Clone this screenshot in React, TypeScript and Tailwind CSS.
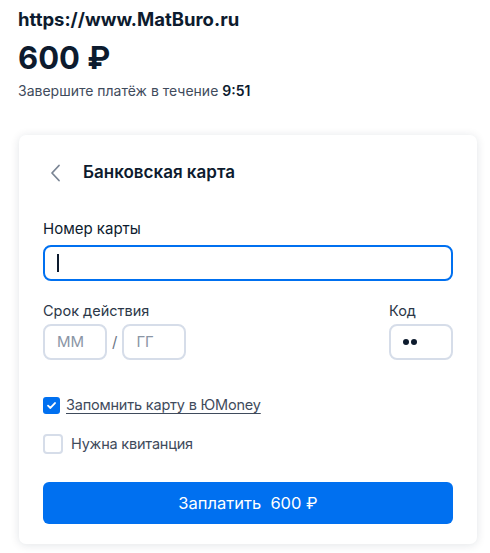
import React from "react";

const App: React.FC = () => {
  return (
    <div
      className="min-h-[553px] w-[490px] bg-white text-[#0d1b2e]"
      style={{ fontFamily: "Inter, 'Noto Sans', sans-serif" }}
    >
      <div className="px-[18px] pt-[6px]">
        <div className="text-[18.5px] font-bold leading-[26px]">https://www.MatBuro.ru</div>
        <div className="mt-[7px] text-[31px] font-bold leading-[38px]">600 ₽</div>
        <div className="mt-[5px] text-[14px] leading-[18px] text-[#3f4b5c]">
          Завершите платёж в течение <span className="font-semibold text-[#0d1b2e]">9:51</span>
        </div>
      </div>

      <div className="ml-[19px] mr-[13px] mt-[35px] rounded-[7px] bg-white px-[24px] pb-[20px] shadow-[0_1px_10px_rgba(20,30,60,0.12)]">
        <div className="flex h-[73px] items-center pt-[2px]">
          <svg width="20" height="20" viewBox="0 0 20 20" className="ml-[3px]">
            <path d="M13 2.5 L6 10 L13 17.5" fill="none" stroke="#7a8594" strokeWidth="1.8" strokeLinecap="round" strokeLinejoin="round" />
          </svg>
          <span className="ml-[17px] text-[17px] font-semibold">Банковская карта</span>
        </div>

        <div className="mt-[11px] text-[15px] leading-[20px]">Номер карты</div>
        <div className="mt-[6px] flex h-[36px] items-center rounded-[8px] border-2 border-[#0070f0] px-[12px]">
          <div className="h-[18px] w-[1.5px] bg-[#0d1b2e]" />
        </div>

        <div className="mt-[20px] flex justify-between">
          <div>
            <div className="text-[14.5px] leading-[20px] text-[#2b3748]">Срок действия</div>
            <div className="mt-[3px] flex items-center">
              <div className="flex h-[36px] w-[64px] items-center rounded-[8px] border-2 border-[#d6dde9] px-[12px] text-[15px] text-[#8a95a5]">
                ММ
              </div>
              <span className="mx-[5px] text-[15px] text-[#6b7585]">/</span>
              <div className="flex h-[36px] w-[64px] items-center rounded-[8px] border-2 border-[#d6dde9] px-[12px] text-[15px] text-[#8a95a5]">
                ГГ
              </div>
            </div>
          </div>
          <div className="w-[64px]">
            <div className="text-[14.5px] leading-[20px] text-[#2b3748]">Код</div>
            <div className="mt-[3px] flex h-[36px] items-center gap-[2px] rounded-[8px] border-2 border-[#d6dde9] px-[12px]">
              <span className="h-[6px] w-[6px] rounded-full bg-[#0d1b2e]" />
              <span className="h-[6px] w-[6px] rounded-full bg-[#0d1b2e]" />
            </div>
          </div>
        </div>

        <div className="mt-[35px] flex items-center">
          <div className="flex h-[17px] w-[17px] items-center justify-center rounded-[3px] bg-[#0070f0]">
            <svg width="11" height="11" viewBox="0 0 12 12">
              <path d="M2.2 6.2 L4.8 8.7 L9.8 3.3" fill="none" stroke="white" strokeWidth="2" strokeLinecap="round" strokeLinejoin="round" />
            </svg>
          </div>
          <span className="ml-[6px] text-[14.5px] leading-[20px] tracking-[-0.2px] text-[#3f4b5c] underline decoration-[#3f4b5c] underline-offset-[3px]">
            Запомнить карту в ЮMoney
          </span>
        </div>

        <div className="mt-[19px] flex items-center">
          <div className="h-[20px] w-[20px] rounded-[4px] border-2 border-[#d6dde9]" />
          <span className="ml-[8px] text-[14.5px] leading-[20px] tracking-[-0.2px] text-[#3f4b5c]">Нужна квитанция</span>
        </div>

        <button className="mt-[28px] flex h-[42px] w-full items-center justify-center rounded-[6px] bg-[#0070f0] text-[16.5px] text-white">
          Заплатить&nbsp; 600 ₽
        </button>
      </div>
    </div>
  );
};

export default App;
